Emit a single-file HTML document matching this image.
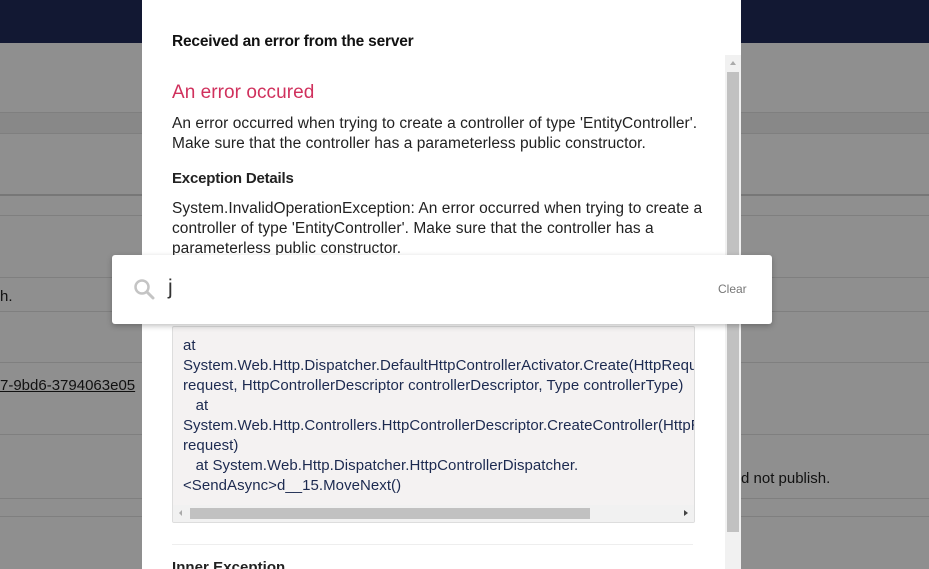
<!DOCTYPE html>
<html><head><style>
body{margin:0;width:929px;height:569px;overflow:hidden;position:relative;background:#8f8f8f;font-family:"Liberation Sans",sans-serif;}
.top{position:absolute;left:0;top:0;width:929px;height:43px;background:#121833;}
.ln{position:absolute;left:0;width:929px;height:1px;background:#7f7f7f;}
.band{position:absolute;left:0;width:929px;background:#888;}
.bt{position:absolute;font-size:15px;color:#111;}
.modal{position:absolute;left:142px;top:0;width:599px;height:569px;background:#fff;overflow:hidden;}
.modal h1{position:absolute;left:30px;top:33px;margin:0;font-size:15.5px;font-weight:bold;color:#111;letter-spacing:-0.2px;}
.c{position:absolute;left:30px;width:545px;font-size:15.5px;color:#222;line-height:20px;letter-spacing:0.05px;}
.sb{position:absolute;left:583px;top:55px;width:16px;height:514px;background:#f1f1f1;}
.thumb{position:absolute;left:2px;top:17px;width:12px;height:460px;background:#c1c1c1;}
.code{position:absolute;left:30px;top:326px;width:521px;height:195px;background:#f4f2f2;border:1px solid #ddd;border-radius:2px;overflow:hidden;}
.code pre{margin:0;padding:9px 10px;font-family:"Liberation Sans",sans-serif;font-size:15px;line-height:20px;color:#1c2a50;letter-spacing:0.05px;white-space:pre;}
.hs{position:absolute;left:0;bottom:0;width:521px;height:17px;background:#f1f1f1;}
.search{position:absolute;left:112px;top:255px;width:660px;height:69px;background:#fff;border-radius:3px;box-shadow:0 2px 6px rgba(0,0,0,.25);}
</style></head><body>
<div class="top"></div>
<div class="band" style="top:112px;height:21px"></div>
<div class="ln" style="top:112px"></div><div class="ln" style="top:133px"></div>
<div class="ln" style="top:194px;background:#777;height:2px"></div><div class="ln" style="top:215px"></div>
<div class="ln" style="top:277px"></div><div class="ln" style="top:311px"></div>
<div class="ln" style="top:362px"></div><div class="ln" style="top:434px"></div>
<div class="ln" style="top:498px"></div><div class="ln" style="top:516px"></div>
<div class="bt" style="left:0;top:288px">h.</div>
<div class="bt" style="left:0;top:377px;text-decoration:underline">7-9bd6-3794063e05</div>
<div class="bt" style="left:741px;top:470px">d not publish.</div>
<div class="modal">
<h1>Received an error from the server</h1>
<div class="c" style="top:83px;font-size:19px;color:#d0315d;">An error occured</div>
<div class="c" style="top:114px">An error occurred when trying to create a controller of type 'EntityController'.<br>Make sure that the controller has a parameterless public constructor.</div>
<div class="c" style="top:169px;font-weight:bold;font-size:15px;letter-spacing:-0.2px">Exception Details</div>
<div class="c" style="top:199px">System.InvalidOperationException: An error occurred when trying to create a<br>controller of type 'EntityController'. Make sure that the controller has a<br>parameterless public constructor.</div>
<div class="code"><pre>at
System.Web.Http.Dispatcher.DefaultHttpControllerActivator.Create(HttpRequestMessage
request, HttpControllerDescriptor controllerDescriptor, Type controllerType)
   at
System.Web.Http.Controllers.HttpControllerDescriptor.CreateController(HttpRequestMessage
request)
   at System.Web.Http.Dispatcher.HttpControllerDispatcher.
&lt;SendAsync&gt;d__15.MoveNext()</pre>
<div class="hs"><div style="position:absolute;left:17px;top:3px;width:400px;height:11px;background:#c1c1c1"></div>
<div style="position:absolute;left:6px;top:5px;border:3px solid transparent;border-right:3px solid #aaa;border-left:0"></div>
<div style="position:absolute;right:6px;top:5px;border:3px solid transparent;border-left:4px solid #444;border-right:0"></div></div>
</div>
<div style="position:absolute;left:30px;top:544px;width:521px;height:1px;background:#eee"></div>
<div class="c" style="top:558px;font-weight:bold;font-size:15px">Inner Exception</div>
<div class="sb"><div class="thumb"></div><div style="position:absolute;left:5px;top:6px;border:3px solid transparent;border-bottom:4px solid #aaa;border-top:0"></div></div>
</div>
<div class="search">
<svg style="position:absolute;left:21px;top:23px" width="22" height="22" viewBox="0 0 22 22"><circle cx="9" cy="9" r="6.5" fill="none" stroke="#c4c4c4" stroke-width="2.5"/><path d="M14 14l6 6" stroke="#c4c4c4" stroke-width="3" stroke-linecap="round"/></svg>
<div style="position:absolute;left:56px;top:21px;font-size:21px;color:#333">j</div>
<div style="position:absolute;left:606px;top:27px;font-size:12px;color:#777">Clear</div>
</div>
</body></html>
